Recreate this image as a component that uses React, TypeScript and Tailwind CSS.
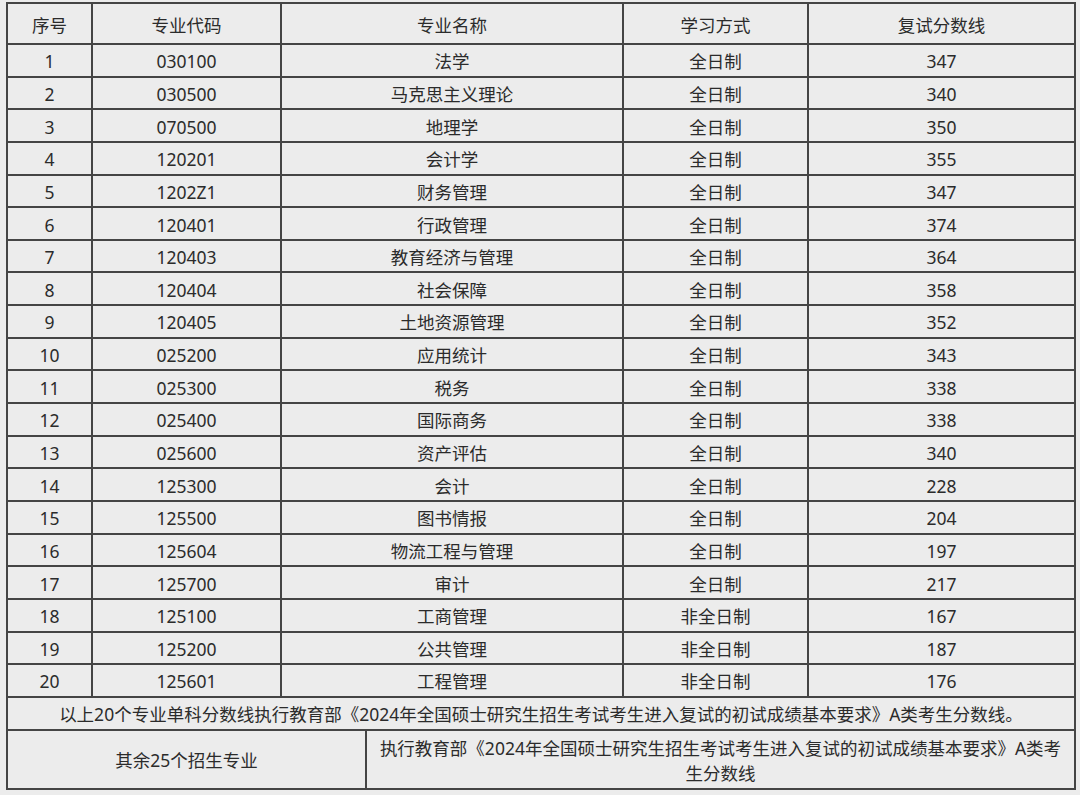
// App.tsx — 2024 复试分数线 table, rendered as a plain bordered table.

const rows: [string, string, string, string, string][] = [
  ["1", "030100", "法学", "全日制", "347"],
  ["2", "030500", "马克思主义理论", "全日制", "340"],
  ["3", "070500", "地理学", "全日制", "350"],
  ["4", "120201", "会计学", "全日制", "355"],
  ["5", "1202Z1", "财务管理", "全日制", "347"],
  ["6", "120401", "行政管理", "全日制", "374"],
  ["7", "120403", "教育经济与管理", "全日制", "364"],
  ["8", "120404", "社会保障", "全日制", "358"],
  ["9", "120405", "土地资源管理", "全日制", "352"],
  ["10", "025200", "应用统计", "全日制", "343"],
  ["11", "025300", "税务", "全日制", "338"],
  ["12", "025400", "国际商务", "全日制", "338"],
  ["13", "025600", "资产评估", "全日制", "340"],
  ["14", "125300", "会计", "全日制", "228"],
  ["15", "125500", "图书情报", "全日制", "204"],
  ["16", "125604", "物流工程与管理", "全日制", "197"],
  ["17", "125700", "审计", "全日制", "217"],
  ["18", "125100", "工商管理", "非全日制", "167"],
  ["19", "125200", "公共管理", "非全日制", "187"],
  ["20", "125601", "工程管理", "非全日制", "176"],
];

// pt nudges the glyphs down a touch so they sit where the original's do.
const cell = "border-2 border-[#454545] px-0 pb-0 pt-[3px] text-center align-middle font-normal";

export default function App() {
  return (
    <div
      className="min-h-[795px] w-[1080px] bg-[#ececec] pl-[6px] pt-[2px] text-[17.5px] leading-[25px] text-[#2b2b2b]"
      style={{ fontFamily: '"Noto Sans", "Noto Sans CJK SC", sans-serif' }}
    >
      <table className="w-[1068px] table-fixed border-collapse">
        {/* The bottom row splits inside 专业名称, hence the extra column. */}
        <colgroup>
          <col className="w-[85px]" />
          <col className="w-[189px]" />
          <col className="w-[85px]" />
          <col className="w-[257px]" />
          <col className="w-[185px]" />
          <col className="w-[267px]" />
        </colgroup>
        <thead>
          <tr className="h-[41px]">
            <th className={cell}>序号</th>
            <th className={cell}>专业代码</th>
            <th className={cell} colSpan={2}>
              专业名称
            </th>
            <th className={cell}>学习方式</th>
            <th className={cell}>复试分数线</th>
          </tr>
        </thead>
        <tbody>
          {rows.map(([no, code, name, mode, score]) => (
            <tr key={no} className="h-[32.65px]">
              <td className={cell}>{no}</td>
              <td className={cell}>{code}</td>
              <td className={cell} colSpan={2}>
                {name}
              </td>
              <td className={cell}>{mode}</td>
              <td className={cell}>{score}</td>
            </tr>
          ))}
          <tr className="h-[33px]">
            <td className={cell} colSpan={6}>
              以上20个专业单科分数线执行教育部《2024年全国硕士研究生招生考试考生进入复试的初试成绩基本要求》A类考生分数线。
            </td>
          </tr>
          <tr className="h-[59px]">
            <td className={cell} colSpan={3}>
              其余25个招生专业
            </td>
            <td className={cell} colSpan={3}>
              执行教育部《2024年全国硕士研究生招生考试考生进入复试的初试成绩基本要求》A类考
              <br />
              生分数线
            </td>
          </tr>
        </tbody>
      </table>
    </div>
  );
}
